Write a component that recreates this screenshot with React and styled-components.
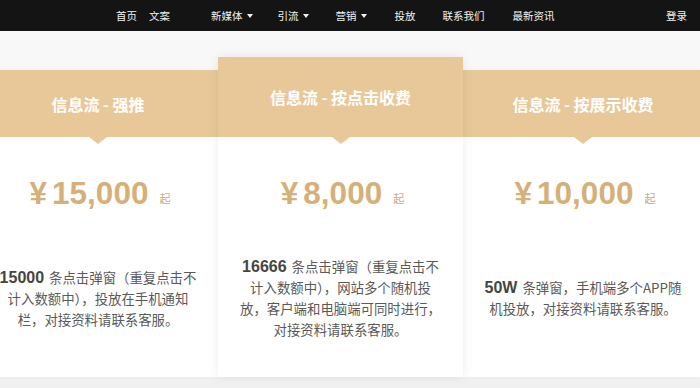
import React from 'react'
import styled, { createGlobalStyle } from 'styled-components'

const GlobalStyle = createGlobalStyle`
  body {
    margin: 0;
    background: #f2f2f2;
    font-family: "Liberation Sans", "Noto Sans CJK SC", sans-serif;
  }
`

const Page = styled.div`
  width: 700px;
  height: 388px;
  overflow: hidden;
  background: linear-gradient(#f7f7f7, #fbfbfb 60%, #f0f0f0);
`

const NavBar = styled.div`
  height: 31px;
  background: #141414;
  display: flex;
  align-items: center;
  padding-left: 116px;
  padding-right: 13px;
`

const NavItem = styled.div`
  color: #f2f2f2;
  font-size: 10.5px;
  font-family: "Noto Sans CJK SC", sans-serif;
  margin-left: ${p => p.$gap || 0}px;
  display: flex;
  align-items: center;
  gap: 4px;
  white-space: nowrap;
  &:last-child {
    margin-left: auto;
  }
`

const Caret = styled.span`
  width: 0;
  height: 0;
  border-left: 3px solid transparent;
  border-right: 3px solid transparent;
  border-top: 4px solid #f2f2f2;
`

const CardRow = styled.div`
  display: flex;
  align-items: flex-end;
  margin-left: -22px;
  padding-top: 26px;
`

const Card = styled.div`
  flex: none;
  width: ${p => (p.$featured ? 245 : 240)}px;
  height: ${p => (p.$featured ? 320 : 307)}px;
  background: #fff;
  display: flex;
  flex-direction: column;
  position: relative;
  z-index: ${p => (p.$featured ? 1 : 0)};
  box-shadow: ${p => (p.$featured ? '0 0 10px rgba(0,0,0,0.08)' : '0 0 4px rgba(0,0,0,0.04)')};
`

const Header = styled.div`
  height: ${p => (p.$featured ? 80 : 67)}px;
  background: #e8c899;
  display: flex;
  align-items: center;
  justify-content: center;
  position: relative;
  flex: none;
  color: #fff;
  font-size: 16px;
  font-weight: bold;
  font-family: "Noto Sans CJK SC", sans-serif;
  &::after {
    content: '';
    position: absolute;
    left: 50%;
    bottom: -7px;
    margin-left: -9px;
    border-left: 9px solid transparent;
    border-right: 9px solid transparent;
    border-top: 7px solid #e8c899;
  }
`

const PriceRow = styled.div`
  height: 112px;
  display: flex;
  align-items: center;
  justify-content: center;
  color: #d5b078;
  font-weight: bold;
  font-size: 31.5px;
  padding-left: 4px;
`

const Yen = styled.span`
  margin-right: 5px;
`

const From = styled.span`
  font-size: 11px;
  font-weight: normal;
  color: #c8ab80;
  font-family: "Noto Sans CJK SC", sans-serif;
  margin-left: 11px;
  margin-top: 10px;
`

const DescArea = styled.div`
  height: 98px;
  display: flex;
  align-items: center;
  justify-content: center;
`

const Desc = styled.p`
  margin: 0;
  width: 204px;
  text-align: center;
  font-size: 13.4px;
  line-height: 21px;
  color: #5a5a5a;
  font-family: "Noto Sans CJK SC", sans-serif;
`

const Num = styled.b`
  display: inline-block;
  line-height: 18px;
  font-family: "Liberation Sans", sans-serif;
  font-size: 16px;
  color: #464640;
  margin-right: 5px;
`

const navs = [
  { label: '首页', gap: 0 },
  { label: '文案', gap: 12 },
  { label: '新媒体', gap: 41, drop: true },
  { label: '引流', gap: 25, drop: true },
  { label: '营销', gap: 27, drop: true },
  { label: '投放', gap: 28 },
  { label: '联系我们', gap: 27 },
  { label: '最新资讯', gap: 28 },
  { label: '登录' }
]

const plans = [
  { title: '信息流 - 强推', price: '15,000', num: '15000', text: '条点击弹窗（重复点击不计入数额中），投放在手机通知栏，对接资料请联系客服。' },
  { title: '信息流 - 按点击收费', price: '8,000', num: '16666', text: '条点击弹窗（重复点击不计入数额中），网站多个随机投放，客户端和电脑端可同时进行，对接资料请联系客服。', featured: true },
  { title: '信息流 - 按展示收费', price: '10,000', num: '50W', text: '条弹窗，手机端多个APP随机投放，对接资料请联系客服。' }
]

const App = () => {
  return (
    <Page>
      <GlobalStyle />
      <NavBar>
        {navs.map(item => (
          <NavItem key={item.label} $gap={item.gap}>
            {item.label}
            {item.drop && <Caret />}
          </NavItem>
        ))}
      </NavBar>
      <CardRow>
        {plans.map(plan => (
          <Card key={plan.title} $featured={plan.featured}>
            <Header $featured={plan.featured}>{plan.title}</Header>
            <PriceRow>
              <Yen>¥</Yen>
              {plan.price}
              <From>起</From>
            </PriceRow>
            <DescArea>
              <Desc>
                <Num>{plan.num}</Num>
                {plan.text}
              </Desc>
            </DescArea>
          </Card>
        ))}
      </CardRow>
    </Page>
  )
}

export default App
